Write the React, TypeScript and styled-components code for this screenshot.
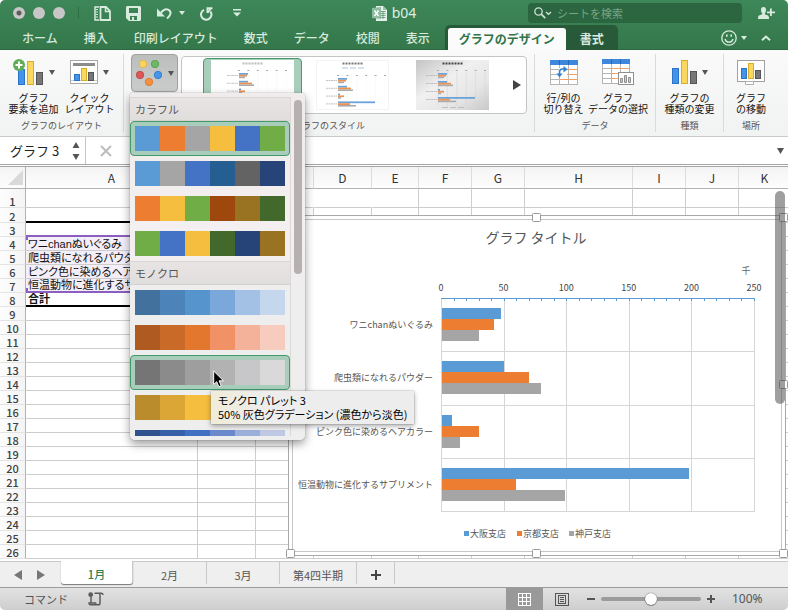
import React, { useState } from "react";
import styled, { createGlobalStyle, css } from "styled-components";

const ui = `"Noto Sans CJK JP", "Noto Sans", sans-serif`;
const cellFont = `"Liberation Sans", "Noto Sans CJK JP", sans-serif`;

const GlobalStyle = createGlobalStyle`
  *, *::before, *::after { box-sizing: border-box; }
  html, body { margin: 0; background: #fff; }
  body, button, input { font-family: ${ui}; }
  button, input { padding: 0; margin: 0; border: 0; background: none; color: inherit; }
  button { cursor: default; }
  svg { display: block; flex: none; }
`;

const Window = styled.div`
  display: flex;
  flex-direction: column;
  min-height: 100vh;
  overflow: hidden;
  border-radius: 5px;
  background: #efefef;
  color: #222;
`;

/* ---------- title bar ---------- */

const Header = styled.header`
  background: linear-gradient(#3d8758, #34774a);
  color: #fff;
  box-shadow: inset 0 -1px #2c6840;
`;

const TitleBar = styled.div`
  display: grid;
  grid-template-columns: 1fr auto 1fr;
  align-items: center;
  height: 26px;
  padding: 0 13px;
`;

const TitleSide = styled.div<{ $end?: boolean }>`
  display: flex;
  align-items: center;
  justify-content: ${(p) => (p.$end ? "flex-end" : "flex-start")};
`;

const Lights = styled.div`
  display: flex;
  gap: 8px;
  padding-right: 13px;
  border-right: 1px solid #2f6e45;
  margin-right: 15px;
`;

const Light = styled.button<{ $dot?: boolean }>`
  width: 12px;
  height: 12px;
  border-radius: 50%;
  background: ${(p) => (p.$dot ? "radial-gradient(#5d5a5b 0 2px, #c9c6c7 3px)" : "#c9c6c7")};
`;

const Tools = styled.div`
  display: flex;
  align-items: center;
  gap: 15px;
`;

const IconButton = styled.button`
  display: flex;
  align-items: center;
  gap: 7px;
  color: #d9ebdf;
`;

const CustomizeButton = styled(IconButton)`
  margin-left: 5px;
`;

const FileTitle = styled.h1`
  display: flex;
  align-items: center;
  gap: 5px;
  margin: 0;
  font: 14px/20px "Noto Sans", sans-serif;
  color: #dfeee4;
`;

const Search = styled.label`
  display: flex;
  align-items: center;
  gap: 5px;
  width: 214px;
  height: 20px;
  padding-left: 6px;
  border-radius: 4px;
  background: #2c6640;
  margin-right: 16px;

  input {
    flex: 1;
    min-width: 0;
    font-size: 11px;
    outline: none;
  }
  input::placeholder { color: #78a588; opacity: 1; }
`;

/* ---------- ribbon tabs ---------- */

const TabRow = styled.nav`
  display: flex;
  align-items: flex-end;
  height: 24px;
  padding: 0 17px 0 9px;
`;

const Tab = styled.button`
  height: 24px;
  padding: 0 13px;
  font-size: 12px;
  font-weight: 500;
  line-height: 24px;
  color: #d8eadf;
  white-space: nowrap;
`;

const ContextTabs = styled.div`
  display: flex;
  height: 25px;
  margin-left: 2px;
  padding: 3px 0 0 3px;
  border-radius: 5px 5px 0 0;
  background: #285a39;
`;

const ContextTab = styled(Tab)<{ $active?: boolean }>`
  height: 22px;
  padding: 0 ${(p) => (p.$active ? 11 : 14)}px;
  line-height: 20px;
  font-weight: 700;
  border-radius: 3px 3px 0 0;
  background: ${(p) => (p.$active ? "#fbfbfb" : "transparent")};
  color: ${(p) => (p.$active ? "#2f7548" : "#dcebe1")};
`;

const TabEnd = styled.div`
  display: flex;
  align-items: center;
  gap: 14px;
  height: 24px;
  margin-left: auto;
`;

const FeedbackButton = styled(IconButton)`
  gap: 4px;
`;

/* ---------- ribbon ---------- */

const Ribbon = styled.section`
  display: flex;
  height: 87px;
  padding: 4px 0;
  background: linear-gradient(#fafafa, #f1f2f2);
  border-bottom: 1px solid #c9cbca;
`;

const Group = styled.div<{ $grow?: boolean; $last?: boolean }>`
  display: flex;
  flex-direction: column;
  flex: ${(p) => (p.$grow ? "1 1 0" : "none")};
  min-width: 0;
  align-items: ${(p) => (p.$grow ? "stretch" : "center")};
  justify-content: space-between;
  padding: 0 7px;
  border-right: ${(p) => (p.$last ? 0 : 1)}px solid #d9dada;
  margin-right: ${(p) => (p.$last ? 10 : 0)}px;
`;

const GroupItems = styled.div`
  display: flex;
  gap: 3px;
`;

const GroupLabel = styled.div`
  font-size: 9px;
  line-height: 12px;
  color: #555;
  text-align: center;
`;

const BigButton = styled.button<{ $w: number }>`
  display: flex;
  flex-direction: column;
  align-items: center;
  width: ${(p) => p.$w}px;
  padding-top: 4px;
  font-size: 10px;
  line-height: 11px;
  color: #111;
  white-space: nowrap;
`;

const IconLine = styled.span`
  display: flex;
  align-items: center;
  justify-content: center;
  gap: 5px;
  height: 28px;
  margin-bottom: 6px;
`;

const ColorAnchor = styled.div`
  position: relative;
`;

const ColorButton = styled.button`
  display: flex;
  align-items: center;
  justify-content: center;
  gap: 6px;
  width: 47px;
  height: 38px;
  border: 1px solid #9fa0a0;
  border-radius: 4px;
  background: linear-gradient(#bcbdbd, #cbcccc);
`;

const Gallery = styled.div`
  display: flex;
  align-items: center;
  flex: 1;
  min-width: 0;
  height: 58px;
  margin-top: 2px;
  padding: 1px 5px 1px 21px;
  border: 1px solid #c3c5c4;
  border-radius: 4px;
  background: #fff;
`;

const GalleryItem = styled.button<{ $selected?: boolean }>`
  flex: none;
  height: 54px;
  padding: 1px 7px;
  margin-right: ${(p) => (p.$selected ? 6 : 11)}px;
  border-radius: 4px;
  border: 1px solid ${(p) => (p.$selected ? "#4a9a6c" : "transparent")};
  background: ${(p) => (p.$selected ? "#a9cebb" : "transparent")};
`;

const GalleryNext = styled.button`
  margin-left: auto;
`;

/* ---------- palette popup ---------- */

const Popup = styled.div`
  position: absolute;
  z-index: 10;
  top: 39px;
  left: -1px;
  display: flex;
  width: 175px;
  height: 347px;
  padding: 4px 0;
  border-radius: 3px 3px 5px 5px;
  background: linear-gradient(#f0eceb, #f4eff0 40%, #eeeeee 60%);
  box-shadow: 0 0 1px rgba(0, 0, 0, 0.5), 0 4px 10px rgba(0, 0, 0, 0.4);
`;

const PaletteList = styled.div`
  width: 161px;
  overflow: hidden;
  border-right: 1px solid #dcd8d8;
`;

const PaletteHeading = styled.h2`
  height: 24px;
  margin: 0;
  padding-left: 5px;
  font-size: 11px;
  font-weight: 400;
  line-height: 22px;
  color: #555;
  background: linear-gradient(#e8e4e3, #e0dedd);
  border-top: 1px solid #d8d5d4;
  border-bottom: 1px solid #d4d1d0;
`;

const PaletteItem = styled.button<{ $selected?: boolean }>`
  display: flex;
  width: 160px;
  height: 35px;
  padding: 4px;
  border: 1px solid ${(p) => (p.$selected ? "#43996a" : "transparent")};
  border-radius: 4px;
  background: ${(p) => (p.$selected ? "#a8cdba" : "transparent")};
`;

const Swatch = styled.span<{ $c: string }>`
  flex: 1;
  height: 25px;
  background: ${(p) => p.$c};
`;

const PopupThumb = styled.div`
  width: 8px;
  height: 174px;
  margin: 3px 0 0 3px;
  border-radius: 4px;
  background: #b6b0b0;
`;

const Pointer = styled.div`
  position: absolute;
  left: 83px;
  top: 277px;
`;

const Tooltip = styled.div`
  position: absolute;
  left: 81px;
  top: 298px;
  padding: 2px 7px 3px;
  font-size: 11px;
  line-height: 14px;
  font-feature-settings: "palt";
  color: #000;
  white-space: nowrap;
  background: linear-gradient(90deg, #f0ecd9, #ededed 30%);
  box-shadow: 0 0 1px rgba(0, 0, 0, 0.5), 0 2px 5px rgba(0, 0, 0, 0.35);
`;

/* ---------- formula bar ---------- */

const FormulaBar = styled.div`
  display: flex;
  align-items: center;
  height: 30px;
  border-bottom: 3px double #a3a5a4;
  background: #fff;
`;

const NameBox = styled.div`
  display: flex;
  align-items: center;
  width: 86px;
  height: 27px;
  padding: 0 5px 0 10px;
  border-right: 1px solid #c4c6c5;

  input {
    flex: 1;
    min-width: 0;
    font-size: 13px;
    color: #222;
  }
`;

const FormulaInput = styled.input`
  flex: 1;
  min-width: 0;
  height: 26px;
  margin-left: 20px;
  font-size: 12px;
`;

const CancelButton = styled.button`
  margin-left: 14px;
`;

const ExpandButton = styled.button`
  margin-right: 4px;
`;

/* ---------- sheet ---------- */

const Sheet = styled.main`
  position: relative;
  flex: 1;
  overflow: hidden;
  background: #fff;
`;

const Grid = styled.table`
  table-layout: fixed;
  width: 791px;
  min-width: 100%;
  border-spacing: 0;
  font-family: ${cellFont};
  font-size: 11px;
  line-height: 12px;
`;

const ColHead = styled.th`
  height: 22px;
  padding: 0;
  font-family: ${ui};
  font-size: 12px;
  font-weight: 400;
  line-height: 20px;
  color: #333;
  background: linear-gradient(#f4f4f4, #fdfdfd);
  border-bottom: 1px solid #b2b2b2;
  border-right: 1px solid #dcdcdc;
`;

const Corner = styled(ColHead)`
  border-right-color: #b2b2b2;

  svg { margin: 0 2px 0 auto; }
`;

const RowHead = styled.th<{ $h: number }>`
  height: ${(p) => p.$h}px;
  padding: 0;
  font-family: ${ui};
  font-size: 11px;
  font-weight: 500;
  vertical-align: bottom;
  color: #3f3f3f;
  background: linear-gradient(90deg, #fdfdfd, #f4f4f4);
  border-bottom: 1px solid #e4e4e4;
  border-right: 1px solid #b2b2b2;
`;

type Line = "grid" | "black" | "purple";
const lineCss = {
  grid: "1px solid #cdcdcd",
  black: "2px solid #000",
  purple: "2px solid #8a5fc0",
};

const Cell = styled.td<{ $line: Line; $open?: boolean; $tint?: boolean; $bold?: boolean; $mark?: "top" | "bottom" }>`
  position: relative;
  padding: 0 0 0 2px;
  overflow: hidden;
  color: #111;
  white-space: nowrap;
  font-feature-settings: "palt";
  font-weight: ${(p) => (p.$bold ? 700 : 400)};
  border-bottom: ${(p) => lineCss[p.$line]};
  border-right: 1px solid ${(p) => (p.$open ? "transparent" : "#cdcdcd")};
  background: ${(p) => (p.$tint ? "#f3eef8" : "#fff")};
  ${(p) =>
    p.$mark &&
    css`
      &::before {
        content: "";
        position: absolute;
        left: 0;
        ${p.$mark}: 0;
        width: 2px;
        height: 3px;
        background: #8a5fc0;
      }
    `}
`;

const ChartObject = styled.figure`
  position: absolute;
  left: 285px;
  top: 44px;
  margin: 0;
`;

const SheetScroll = styled.div`
  position: absolute;
  right: 3px;
  top: 24px;
  width: 10px;
  height: 213px;
  border-radius: 5px;
  background: rgba(70, 70, 70, 0.52);
`;

/* ---------- sheet tabs and status bar ---------- */

const SheetTabs = styled.nav`
  display: flex;
  height: 26px;
  border-top: 1px solid #c9c9c9;
  background: #efefef;
`;

const TabArrows = styled.div`
  display: flex;
  align-items: center;
  gap: 15px;
  width: 61px;
  padding-left: 14px;
`;

const SheetTab = styled.button<{ $active?: boolean; $w: number }>`
  display: flex;
  align-items: center;
  justify-content: center;
  width: ${(p) => p.$w}px;
  height: 22px;
  padding-top: 3px;
  font-size: 11px;
  line-height: 16px;
  color: #555;
  border-right: 1px solid #c9c9c9;
  ${(p) =>
    p.$active &&
    css`
      height: 23px;
      margin-top: -1px;
      color: #2a8050;
      font-weight: 500;
      background: #fff;
      border-radius: 0 0 3px 3px;
      box-shadow: 0 1px 1px rgba(0, 0, 0, 0.5);
    `}
`;

const StatusBar = styled.footer`
  display: flex;
  align-items: center;
  height: 23px;
  padding: 0 24px;
  font-size: 11px;
  line-height: 14px;
  color: #555;
  background: linear-gradient(#e2e2e2, #cecece);
  border-top: 1px solid #9b9b9b;
`;

const MacroButton = styled.button`
  margin-left: 20px;
`;

const ViewButton = styled.button<{ $active?: boolean }>`
  display: flex;
  align-items: center;
  justify-content: center;
  width: 37px;
  height: 22px;
  margin-left: ${(p) => (p.$active ? "auto" : "0")};
  background: ${(p) => (p.$active ? "#999" : "none")};
`;

const Zoom = styled.div`
  display: flex;
  align-items: center;
  gap: 6px;
  margin-left: 7px;
`;

const Slider = styled.input`
  appearance: none;
  width: 100px;
  height: 14px;

  &::-webkit-slider-runnable-track {
    height: 4px;
    border-radius: 2px;
    background: #9c9c9a;
  }
  &::-webkit-slider-thumb {
    appearance: none;
    width: 12px;
    height: 12px;
    margin-top: -4px;
    border-radius: 50%;
    background: #fff;
    box-shadow: 0 0 1px rgba(0, 0, 0, 0.8), 0 1px 1px rgba(0, 0, 0, 0.3);
  }
`;

const ZoomValue = styled.output`
  width: 32px;
  margin-left: 11px;
  font-family: "Noto Sans", sans-serif;
  font-size: 12px;
`;

/* ---------- icons ---------- */

const Caret = ({ color = "#555", w = 6, h = 5 }: { color?: string; w?: number; h?: number }) => (
  <svg width={w} height={h} viewBox="0 0 6 4" preserveAspectRatio="none">
    <path d="M0 0h6L3 4z" fill={color} />
  </svg>
);

const Triangle = ({ left, color = "#777" }: { left?: boolean; color?: string }) => (
  <svg width="8" height="10" viewBox="0 0 8 10">
    <path d={left ? "M8 0v10L0 5z" : "M0 0v10l8-5z"} fill={color} />
  </svg>
);

const SidebarIcon = () => (
  <svg width="17" height="15" viewBox="0 0 17 15" fill="none" stroke="currentColor">
    <path d="M5 1H1v13h4" strokeWidth="1.5" />
    <path d="M2 3.500h2M2 6h2M2 8.500h2M2 11h2" strokeWidth="1" />
    <path d="M6.500 1h5.500l4 4v9H6.500z" strokeWidth="1.800" />
    <path d="M11.500 1v4.500H16" strokeWidth="1.500" />
  </svg>
);

const SaveIcon = () => (
  <svg width="15" height="15" viewBox="0 0 15 15">
    <path d="M1 0h13l1 1v13l-1 1H3l-3-3V1zM3 2v5h9V2zM4 10v4h2v-3h2v3h3v-4z" fill="currentColor" fillRule="evenodd" />
  </svg>
);

const UndoIcon = () => (
  <svg width="16" height="13" viewBox="0 0 16 13" fill="none" stroke="currentColor">
    <path d="M4 7C7 2 11 1 13.500 3.500c2 2.300 1 5-2.500 8" strokeWidth="2" />
    <path d="M1 1.500v8h8z" fill="currentColor" stroke="none" />
  </svg>
);

const RedoIcon = () => (
  <svg width="13" height="15" viewBox="0 0 13 15" fill="none" stroke="currentColor" strokeWidth="2">
    <path d="M4 3.800A5.200 5.200 0 1 0 10.500 5.500" />
    <path d="M7.500 7V2.200H12.500" />
    <path d="M7.800 6.500L10.800 2.500" />
  </svg>
);

const CustomizeIcon = () => (
  <svg width="8" height="8" viewBox="0 0 8 8" fill="currentColor">
    <path d="M0 0h8v1.500H0zM0 3.500h8L4 7.500z" />
  </svg>
);

const ExcelIcon = () => (
  <svg width="15" height="15" viewBox="0 0 15 15">
    <path d="M4 0h7l4 4v11H4z" fill="#e6f1ea" />
    <path d="M11 0v4h4z" fill="#9cc2aa" />
    <path d="M8.500 5.500h5M8.500 7.500h5M8.500 9.500h5M8.500 11.500h5M11 5v8" stroke="#5b9672" strokeWidth="0.800" />
    <path d="M0 2l9-1v12l-9-1z" fill="#8fbca0" />
    <path d="M2.500 4.500l4 5.500M6.500 4.500l-4 5.500" stroke="#fff" strokeWidth="1.400" />
  </svg>
);

const SearchIcon = () => (
  <svg width="18" height="12" viewBox="0 0 18 12" fill="none" stroke="#cfe3d6">
    <circle cx="4.500" cy="4.500" r="3.700" strokeWidth="1.300" />
    <path d="M7.200 7.200l4 4" strokeWidth="1.700" />
    <path d="M12 5l2.500 2.300L17 5" strokeWidth="1.300" />
  </svg>
);

const ShareIcon = () => (
  <svg width="17" height="12" viewBox="0 0 17 12" fill="currentColor">
    <path d="M5.500 0C7.300 0 8 1.300 8 3c0 1.500-.5 2.600-1.200 3.200v1L10 8.500c.8.400 1 1.500 1 3.500H0c0-2 .2-3.100 1-3.500l3.200-1.300v-1C3.500 5.600 3 4.500 3 3c0-1.700.7-3 2.500-3z" />
    <path d="M12 1.500h1.800V4.500H17v1.700h-3.200V9H12V6.200H9V4.500h3z" />
  </svg>
);

const SmileIcon = () => (
  <svg width="16" height="16" viewBox="0 0 16 16" fill="none" stroke="currentColor">
    <circle cx="8" cy="8" r="7.200" strokeWidth="1.300" />
    <path d="M4 9c1 4.200 7 4.200 8 0" strokeWidth="1.300" />
    <path d="M5.800 4.500v2.300M10.200 4.500v2.300" strokeWidth="1.600" />
  </svg>
);

const ChevronUp = () => (
  <svg width="10" height="6" viewBox="0 0 10 6" fill="none" stroke="currentColor" strokeWidth="2">
    <path d="M1 5.200L5 1.500l4 3.700" />
  </svg>
);

const Bars = () => (
  <>
    <rect x="0.500" y="8.500" width="6" height="15" fill="#4393e8" stroke="#2a73c9" />
    <rect x="9.500" y="0.500" width="6" height="23" fill="#fad860" stroke="#d9ad28" />
    <rect x="18.500" y="11.500" width="6" height="12" fill="#777" stroke="#555" />
  </>
);

const AddElementIcon = () => (
  <svg width="31" height="27" viewBox="0 0 31 27">
    <g transform="translate(5 2)"><Bars /></g>
    <circle cx="6" cy="6" r="6" fill="#5fae57" />
    <path d="M6 2.500v7M2.500 6h7" stroke="#fff" strokeWidth="2" />
  </svg>
);

const QuickLayoutIcon = () => (
  <svg width="28" height="25" viewBox="0 0 28 25">
    <rect x="0.500" y="0.500" width="27" height="23" fill="#fff" stroke="#a9a9a9" />
    <rect x="3" y="3" width="22" height="3" fill="#8c8c8c" />
    <path d="M1 20.500h26" stroke="#ccc" />
    <rect x="4.500" y="14.500" width="5" height="6" fill="#4393e8" stroke="#2a73c9" />
    <rect x="11.500" y="8.500" width="5" height="12" fill="#fad860" stroke="#d9ad28" />
    <rect x="18.500" y="12.500" width="5" height="8" fill="#777" stroke="#555" />
  </svg>
);

const ColorDots = () => (
  <svg width="26" height="26" viewBox="0 0 26 26">
    <circle cx="7" cy="4" r="3.700" fill="#fad45c" stroke="#dfb23a" strokeWidth="0.800" />
    <circle cx="19" cy="4" r="3.700" fill="#6db965" stroke="#4f9f4b" strokeWidth="0.800" />
    <circle cx="4" cy="15" r="3.700" fill="#dc5757" stroke="#bf4040" strokeWidth="0.800" />
    <circle cx="22" cy="15" r="3.700" fill="#4795e8" stroke="#2b77cc" strokeWidth="0.800" />
    <circle cx="13" cy="22" r="3.700" fill="#f5903f" stroke="#dc7526" strokeWidth="0.800" />
  </svg>
);

const TableBase = () => (
  <>
    <rect x="0.500" y="0.500" width="27" height="24" fill="#fff" stroke="#b5b5b5" />
    <path d="M1 9.500h26M1 14.500h26M1 19.500h26M9.500 5v20M18.500 5v20" stroke="#b5b5b5" />
    <rect x="0" y="0" width="28" height="5" fill="#3d87dc" />
    <path d="M9.500 0v5M18.500 0v5" stroke="#2568b8" />
    <path d="M9.500 9.500h18M9.500 14.500h18M9.500 19.500h18" stroke="#f0a064" />
  </>
);

const SwitchIcon = () => (
  <svg width="28" height="25" viewBox="0 0 28 25">
    <TableBase />
    <path d="M27.500 9v11" stroke="#f0a064" />
    <path d="M9 8h8v9H9z" fill="#fff" />
    <path d="M9.500 14v-2q0-3 3-3H14" fill="none" stroke="#2f7fd6" strokeWidth="1.600" />
    <path d="M13.500 6l4 3.200-4 3.200zM6.500 13.500h6l-3 4z" fill="#2f7fd6" />
  </svg>
);

const SelectDataIcon = () => (
  <svg width="32" height="27" viewBox="0 0 32 27">
    <TableBase />
    <path d="M9.500 9v11M27.500 9v4" stroke="#f0a064" />
    <rect x="16.500" y="13.500" width="15" height="12" fill="#fff" stroke="#909090" />
    <path d="M18.500 23.500v-4h2v4zM22.500 23.500v-7h2v7zM26.500 23.500v-5h2v5z" fill="#ccc" stroke="#8f8f8f" />
  </svg>
);

const ChangeTypeIcon = () => (
  <svg width="25" height="24" viewBox="0 0 25 24">
    <Bars />
  </svg>
);

const MoveChartIcon = () => (
  <svg width="28" height="25" viewBox="0 0 28 25">
    <rect x="0.500" y="0.500" width="27" height="21" fill="#fff" stroke="#a0a0a0" />
    <path d="M8.500 21.500h8v3h-8z" fill="#fff" stroke="#b0b0b0" />
    <rect x="4.500" y="8.500" width="5" height="10" fill="#4393e8" stroke="#2a73c9" />
    <rect x="11.500" y="3.500" width="5" height="15" fill="#fad860" stroke="#d9ad28" />
    <rect x="18.500" y="10.500" width="5" height="8" fill="#777" stroke="#555" />
  </svg>
);

const StyleThumb = ({ shaded, wide }: { shaded?: boolean; wide?: boolean }) => {
  const w = wide ? 83 : 73;
  const x0 = wide ? 28 : 22;
  const y0 = shaded || wide ? 13 : 18;
  const step = shaded ? 8 : 7.800;
  const rows: number[][] = [
    [9, 8, 6],
    [9, 13, 15],
    [2, 6, 3],
    [37, 12, 18],
  ];
  return (
    <svg width={w} height="50" viewBox={`0 0 ${w} 50`}>
      <defs>
        <linearGradient id="shade" x1="0" y1="0" x2="1" y2="1">
          <stop offset="0" stopColor="#c4c4c4" />
          <stop offset="0.400" stopColor="#f0f0f0" />
          <stop offset="0.700" stopColor="#e6e6e6" />
          <stop offset="1" stopColor="#c8c8c8" />
        </linearGradient>
      </defs>
      <rect width={w} height="50" fill={shaded ? "url(#shade)" : "#fff"} />
      {!wide && !shaded && <rect x="0.500" y="0.500" width={w - 1} height="49" fill="none" stroke="#f4f4f4" />}
      {[0, 1, 2, 3, 4, 5].map((i) => (
        <g key={i}>
          <path d={`M${x0 - 1 + i * 9.400} ${y0 - 2.500}h2`} stroke="#aaa" />
          <path d={`M${x0 + i * 9.400} ${y0 - 1}V46`} stroke={shaded ? "#d2d2d2" : "#f4f4f4"} strokeWidth="0.500" />
        </g>
      ))}
      <path d={`M${w / 2 - 10} 3.500h21`} stroke={shaded ? "#444" : wide ? "#bbb" : "#777"} strokeWidth="2" strokeDasharray="2 1" />
      {!wide && !shaded && <path d="M26 8h6M34 8h6M42 8h6" stroke="#9db6d4" strokeWidth="0.800" />}
      {shaded && <path d="M26 47.500h6M34 47.500h6M42 47.500h6" stroke="#b8b8b8" strokeWidth="0.800" />}
      {rows.map((v, i) => {
        const y = y0 + i * step;
        return (
          <g key={i}>
            <path d={`M${x0 - 12} ${y + 2.500}h11`} stroke="#b5b5b5" strokeWidth="0.800" strokeDasharray="2 0.500" />
            <rect x={x0} y={y} width={v[0]} height="1.800" fill="#6aa3da" />
            <rect x={x0} y={y + 1.800} width={v[1]} height="1.800" fill="#f0914f" />
            <rect x={x0} y={y + 3.600} width={v[2]} height="1.600" fill="#aaa" />
          </g>
        );
      })}
    </svg>
  );
};

const MacroIcon = () => (
  <svg width="16" height="14" viewBox="0 0 16 14" fill="none" stroke="#5c5c5c" strokeWidth="1.500">
    <circle cx="2.700" cy="2.700" r="2.400" fill="#5c5c5c" stroke="none" />
    <path d="M6.500 1.200h7c1 0 1.500.6 1.500 1.800M12 1.500v9.500c0 1.200-.6 1.800-1.800 1.800H2.500c-1 0-1.500-.6-1.500-1.800h6.500c0 1 .5 1.500 1.300 1.500M3 5v6" />
  </svg>
);

const GridViewIcon = () => (
  <svg width="13" height="13" viewBox="0 0 13 13">
    <rect x="0.500" y="0.500" width="12" height="12" fill="none" stroke="#fff" />
    <path d="M1 4.500h11M1 8.500h11M4.500 1v11M8.500 1v11" stroke="#fff" />
  </svg>
);

const PageViewIcon = () => (
  <svg width="14" height="13" viewBox="0 0 14 13" fill="none" stroke="#555">
    <rect x="0.500" y="0.500" width="13" height="12" />
    <rect x="3.500" y="2.500" width="7" height="8" />
    <path d="M5 4.500h4M5 6.500h4M5 8.500h4" />
  </svg>
);

/* ---------- data ---------- */

const colorful = [
  ["#5b9bd5", "#ed7d31", "#a5a5a5", "#f5be3e", "#4472c4", "#70ad47"],
  ["#5b9bd5", "#a5a5a5", "#4472c4", "#255e91", "#636363", "#264478"],
  ["#ed7d31", "#f5be3e", "#70ad47", "#9e480e", "#997321", "#43682b"],
  ["#70ad47", "#4472c4", "#f5be3e", "#43682b", "#264478", "#997321"],
];
const mono = [
  ["#41719c", "#4c83b8", "#5694cd", "#7aa8da", "#a3c1e5", "#c5d7ed"],
  ["#ae5a21", "#c96a28", "#e3772e", "#f09166", "#f4b29a", "#f7cbbe"],
  ["#757575", "#8b8b8b", "#9e9e9e", "#b2b2b2", "#c7c7c9", "#d9d9d9"],
  ["#ba8c2b", "#dba636", "#f5be3e", "#f6c965", "#f8d78f", "#fae4b6"],
  ["#2f528f", "#3660a8", "#4170c2", "#6c8acb", "#9aafda", "#c0c9e4"],
];

const columns: [string, number][] = [
  ["A", 172], ["B", 58], ["C", 58], ["D", 58], ["E", 47], ["F", 53],
  ["G", 53], ["H", 108], ["I", 53], ["J", 53], ["K", 52],
];

const products: Record<number, string> = {
  4: "ワニchanぬいぐるみ",
  5: "爬虫類になれるパウダー",
  6: "ピンク色に染めるヘアカラー",
  7: "恒温動物に進化するサプリメント",
  8: "合計",
};

const rowHeight = (n: number) => (n === 1 ? 19 : n === 2 ? 15 : 14);
const rowLine = (n: number): Line => (n === 2 || n === 8 ? "black" : n === 3 || n === 7 ? "purple" : "grid");

/* ---------- chart ---------- */

const chartRows: { label: string; values: number[] }[] = [
  { label: "ワニchanぬいぐるみ", values: [48, 42, 30] },
  { label: "爬虫類になれるパウダー", values: [50, 70, 80] },
  { label: "ピンク色に染めるヘアカラー", values: [9, 30, 15] },
  { label: "恒温動物に進化するサプリメント", values: [198, 60, 99] },
];
const series = [
  { name: "大阪支店", color: "#5b9bd5", x: 179 },
  { name: "京都支店", color: "#ed7d31", x: 232 },
  { name: "神戸支店", color: "#a5a5a5", x: 284 },
];

const ChartDrawing = () => {
  const left = 156;
  const top = 87;
  const unit = 1.252;
  const band = 53.300;
  return (
    <svg width="503" height="350" viewBox="0 0 503 350" role="img" aria-label="グラフ タイトル" fontFamily={ui}>
      <rect x="3.500" y="4.500" width="497" height="340" fill="#fff" stroke="#a9a9a9" />
      <rect x="7.500" y="8.500" width="489" height="332" fill="#fff" stroke="#c6c6c6" />
      <text x="251" y="32" fontSize="14" textAnchor="middle" fill="#555">グラフ タイトル</text>
      <text x="461" y="63" fontSize="9" textAnchor="middle" fill="#666">千</text>
      {[0, 50, 100, 150, 200, 250].map((v) => (
        <g key={v}>
          <path d={`M${Math.round(left + v * unit) + 0.500} ${top}V300`} stroke="#d6d6d6" />
          <text x={left + v * unit} y="80" fontSize="9" textAnchor="middle" fill="#444">{v}</text>
        </g>
      ))}
      {[1, 2, 3, 4].map((i) => (
        <path key={i} d={`M${left} ${Math.round(top + i * band) + 0.500}h314`} stroke="#d6d6d6" />
      ))}
      <path d={`M${left} ${top + 0.500}h314`} stroke="#5b9bd5" />
      {Array.from({ length: 25 }, (_, i) => (
        <path key={i} d={`M${Math.round(left + (i + 1) * 10 * unit) + 0.500} ${top}v3`} stroke="#5b9bd5" />
      ))}
      {chartRows.map((r, i) => {
        const y = Math.round(top + i * band) + 10;
        return (
          <g key={r.label}>
            <text x="148" y={y + 20} fontSize="9" textAnchor="end" fill="#555">{r.label}</text>
            {r.values.map((v, j) => (
              <rect key={j} x={left + 1} y={y + j * 11} width={Math.round(v * unit) - 1} height="11" fill={series[j].color} />
            ))}
          </g>
        );
      })}
      {series.map((s) => (
        <g key={s.name}>
          <rect x={s.x} y="320" width="5" height="5" fill={s.color} />
          <text x={s.x + 6} y="326" fontSize="9" fill="#555">{s.name}</text>
        </g>
      ))}
      {[[5, 6], [251, 6], [498, 6], [5, 173], [498, 173], [5, 342], [251, 342], [498, 342]].map(([x, y]) => (
        <rect key={`${x}-${y}`} x={x - 3.500} y={y - 3.500} width="8" height="8" rx="1" fill="#fff" stroke="#999" />
      ))}
    </svg>
  );
};

const Palette = ({ colors, selected }: { colors: string[]; selected?: boolean }) => (
  <PaletteItem $selected={selected}>
    {colors.map((c) => (
      <Swatch key={c} $c={c} />
    ))}
  </PaletteItem>
);

export default function App() {
  const [zoom, setZoom] = useState(100);
  return (
    <>
      <GlobalStyle />
      <Window>
        <Header>
          <TitleBar>
            <TitleSide>
              <Lights>
                <Light $dot aria-label="閉じる" />
                <Light aria-label="しまう" />
                <Light aria-label="拡大" />
              </Lights>
              <Tools>
                <IconButton aria-label="サイドバー"><SidebarIcon /></IconButton>
                <IconButton aria-label="保存"><SaveIcon /></IconButton>
                <IconButton aria-label="元に戻す"><UndoIcon /><Caret color="#d9ebdf" h={4} /></IconButton>
                <IconButton aria-label="繰り返す"><RedoIcon /></IconButton>
                <CustomizeButton aria-label="カスタマイズ"><CustomizeIcon /></CustomizeButton>
              </Tools>
            </TitleSide>
            <FileTitle><ExcelIcon />b04</FileTitle>
            <TitleSide $end>
              <Search>
                <SearchIcon />
                <input type="search" aria-label="シートを検索" placeholder="シートを検索" />
              </Search>
              <IconButton aria-label="共有"><ShareIcon /></IconButton>
            </TitleSide>
          </TitleBar>
          <TabRow>
            {["ホーム", "挿入", "印刷レイアウト", "数式", "データ", "校閲", "表示"].map((t) => (
              <Tab key={t}>{t}</Tab>
            ))}
            <ContextTabs>
              <ContextTab $active>グラフのデザイン</ContextTab>
              <ContextTab>書式</ContextTab>
            </ContextTabs>
            <TabEnd>
              <FeedbackButton aria-label="フィードバック"><SmileIcon /><Caret color="#d9ebdf" h={4} /></FeedbackButton>
              <IconButton aria-label="リボンを閉じる"><ChevronUp /></IconButton>
            </TabEnd>
          </TabRow>
        </Header>

        <Ribbon>
          <Group>
            <GroupItems>
              <BigButton $w={53}>
                <IconLine><AddElementIcon /><Caret /></IconLine>
                <span>グラフ</span>
                <span>要素を追加</span>
              </BigButton>
              <BigButton $w={53}>
                <IconLine><QuickLayoutIcon /><Caret /></IconLine>
                <span>クイック</span>
                <span>レイアウト</span>
              </BigButton>
            </GroupItems>
            <GroupLabel>グラフのレイアウト</GroupLabel>
          </Group>
          <Group $grow>
            <GroupItems>
              <ColorAnchor>
                <ColorButton aria-label="色の変更"><ColorDots /><Caret /></ColorButton>
                <Popup>
                  <PaletteList>
                    <PaletteHeading>カラフル</PaletteHeading>
                    {colorful.map((p, i) => (
                      <Palette key={i} colors={p} selected={i === 0} />
                    ))}
                    <PaletteHeading>モノクロ</PaletteHeading>
                    {mono.map((p, i) => (
                      <Palette key={i} colors={p} selected={i === 2} />
                    ))}
                  </PaletteList>
                  <PopupThumb />
                  <Tooltip role="tooltip">
                    <div>モノクロ パレット 3</div>
                    <div>50% 灰色グラデーション (濃色から淡色)</div>
                  </Tooltip>
                  <Pointer>
                    <svg width="12" height="18" viewBox="0 0 12 18">
                      <path d="M0.700 1v13.500l3-2.800 2.100 5 2.400-1-2.100-4.900h4.400z" fill="#000" stroke="#fff" />
                    </svg>
                  </Pointer>
                </Popup>
              </ColorAnchor>
              <Gallery>
                <GalleryItem $selected aria-label="スタイル 1"><StyleThumb wide /></GalleryItem>
                <GalleryItem aria-label="スタイル 2"><StyleThumb /></GalleryItem>
                <GalleryItem aria-label="スタイル 3"><StyleThumb shaded /></GalleryItem>
                <GalleryNext aria-label="次へ"><Triangle color="#444" /></GalleryNext>
              </Gallery>
            </GroupItems>
            <GroupLabel>グラフのスタイル</GroupLabel>
          </Group>
          <Group>
            <GroupItems>
              <BigButton $w={43}>
                <IconLine><SwitchIcon /></IconLine>
                <span>行/列の</span>
                <span>切り替え</span>
              </BigButton>
              <BigButton $w={60}>
                <IconLine><SelectDataIcon /></IconLine>
                <span>グラフ</span>
                <span>データの選択</span>
              </BigButton>
            </GroupItems>
            <GroupLabel>データ</GroupLabel>
          </Group>
          <Group>
            <BigButton $w={53}>
              <IconLine><ChangeTypeIcon /><Caret /></IconLine>
              <span>グラフの</span>
              <span>種類の変更</span>
            </BigButton>
            <GroupLabel>種類</GroupLabel>
          </Group>
          <Group $last>
            <BigButton $w={40}>
              <IconLine><MoveChartIcon /></IconLine>
              <span>グラフ</span>
              <span>の移動</span>
            </BigButton>
            <GroupLabel>場所</GroupLabel>
          </Group>
        </Ribbon>

        <FormulaBar>
          <NameBox>
            <input aria-label="名前ボックス" defaultValue="グラフ 3" />
            <svg width="8" height="18" viewBox="0 0 8 18" fill="#555">
              <path d="M4 0l3.500 6h-7zM4 18l3.500-6h-7z" />
            </svg>
          </NameBox>
          <CancelButton aria-label="キャンセル">
            <svg width="12" height="12" viewBox="0 0 12 12" stroke="#bdbdbd" strokeWidth="2">
              <path d="M1 1l10 10M11 1L1 11" />
            </svg>
          </CancelButton>
          <FormulaInput aria-label="数式" />
          <ExpandButton aria-label="数式バーを広げる"><Caret w={7} h={6} /></ExpandButton>
        </FormulaBar>

        <Sheet>
          <Grid>
            <colgroup>
              <col style={{ width: 26 }} />
              {columns.map(([name, w]) => (
                <col key={name} style={{ width: w }} />
              ))}
            </colgroup>
            <thead>
              <tr>
                <Corner aria-label="すべて選択">
                  <svg width="15" height="15" viewBox="0 0 15 15"><path d="M15 0v15H0z" fill="#d9d9d9" /></svg>
                </Corner>
                {columns.map(([name]) => (
                  <ColHead key={name} scope="col">{name}</ColHead>
                ))}
              </tr>
            </thead>
            <tbody>
              {Array.from({ length: 26 }, (_, i) => i + 1).map((n) => (
                <tr key={n}>
                  <RowHead scope="row" $h={rowHeight(n)}>{n}</RowHead>
                  {columns.map(([name], c) => (
                    <Cell
                      key={name}
                      $line={c > 3 && n < 9 ? "grid" : rowLine(n)}
                      $open={n === 1 && c < 4}
                      $tint={c === 0 && n > 3 && n < 8}
                      $bold={n === 8}
                      $mark={c === 0 ? (n === 4 ? "top" : n === 7 ? "bottom" : undefined) : undefined}
                    >
                      {c === 0 ? products[n] : null}
                    </Cell>
                  ))}
                </tr>
              ))}
            </tbody>
          </Grid>
          <ChartObject>
            <ChartDrawing />
          </ChartObject>
          <SheetScroll />
        </Sheet>

        <SheetTabs>
          <TabArrows>
            <button aria-label="前のシート"><Triangle left /></button>
            <button aria-label="次のシート"><Triangle /></button>
          </TabArrows>
          <SheetTab $active $w={72}>1月</SheetTab>
          <SheetTab $w={74}>2月</SheetTab>
          <SheetTab $w={73}>3月</SheetTab>
          <SheetTab $w={77}>第4四半期</SheetTab>
          <SheetTab $w={38} aria-label="シートを追加">
            <svg width="10" height="10" viewBox="0 0 10 10"><path d="M5 0v10M0 5h10" stroke="#444" strokeWidth="2" /></svg>
          </SheetTab>
        </SheetTabs>

        <StatusBar>
          <span>コマンド</span>
          <MacroButton aria-label="マクロの記録"><MacroIcon /></MacroButton>
          <ViewButton $active aria-label="標準"><GridViewIcon /></ViewButton>
          <ViewButton aria-label="ページレイアウト"><PageViewIcon /></ViewButton>
          <Zoom>
            <button aria-label="縮小"><svg width="8" height="8" viewBox="0 0 8 8"><path d="M0 4h8" stroke="#555" strokeWidth="2" /></svg></button>
            <Slider type="range" min={0} max={200} value={zoom} onChange={(e) => setZoom(Number(e.target.value))} aria-label="ズーム" />
            <button aria-label="拡大"><svg width="8" height="8" viewBox="0 0 8 8"><path d="M4 0v8M0 4h8" stroke="#555" strokeWidth="2" /></svg></button>
            <ZoomValue>{zoom}%</ZoomValue>
          </Zoom>
        </StatusBar>
      </Window>
    </>
  );
}
